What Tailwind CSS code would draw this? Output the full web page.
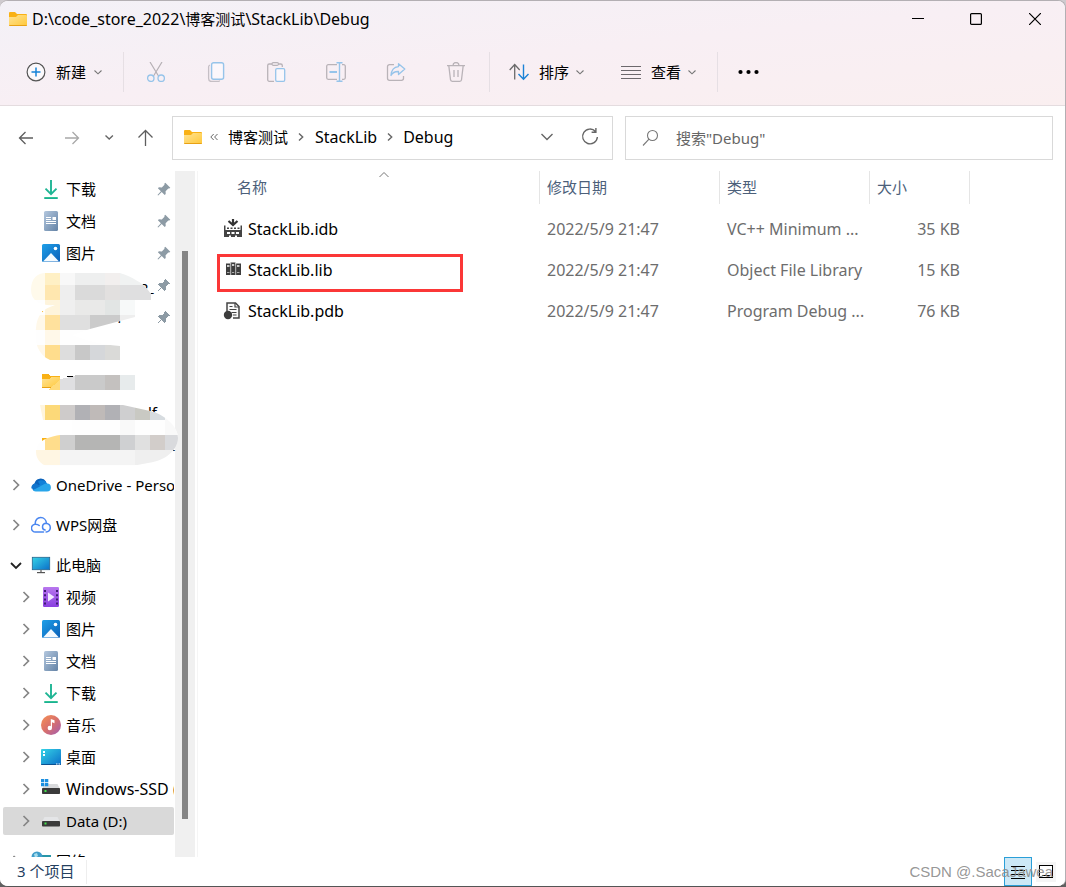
<!DOCTYPE html>
<html lang="zh-CN">
<head>
<meta charset="utf-8">
<title>D:\code_store_2022\博客测试\StackLib\Debug</title>
<script src="https://cdn.jsdelivr.net/npm/@tailwindcss/browser@4"></script>
</head>
<body class="h-screen overflow-hidden bg-linear-to-b from-[#cfcbcf] to-[#606060] font-['Noto_Sans','Noto_Sans_CJK_SC',sans-serif] text-[15px] leading-5 text-black">

<svg class="absolute size-0" aria-hidden="true">
  <defs>
    <linearGradient id="gFolder" x1="0" y1="0" x2="1" y2="1"><stop offset="0" stop-color="#ffe394"/><stop offset="1" stop-color="#ffc83a"/></linearGradient>
    <linearGradient id="gBlue" x1="0" y1="0" x2="1" y2="1"><stop offset="0" stop-color="#1fa0e8"/><stop offset="1" stop-color="#0a5fb8"/></linearGradient>
    <linearGradient id="gCyan" x1="0" y1="0" x2="1" y2="1"><stop offset="0" stop-color="#35d3e6"/><stop offset="1" stop-color="#0b6fc9"/></linearGradient>
    <linearGradient id="gGreen" x1="0" y1="0" x2="0" y2="1"><stop offset="0" stop-color="#3ccf93"/><stop offset="1" stop-color="#10a394"/></linearGradient>
    <linearGradient id="gDoc" x1="0" y1="0" x2="1" y2="1"><stop offset="0" stop-color="#b3c7de"/><stop offset="1" stop-color="#6483a6"/></linearGradient>
    <linearGradient id="gVideo" x1="0" y1="0" x2="0" y2="1"><stop offset="0" stop-color="#b877ee"/><stop offset="1" stop-color="#8a3fe0"/></linearGradient>
    <linearGradient id="gMusic" x1="0" y1="0" x2="1" y2="1"><stop offset="0" stop-color="#f79153"/><stop offset=".5" stop-color="#d8706c"/><stop offset="1" stop-color="#a05cb5"/></linearGradient>
  </defs>
  <symbol id="folder" viewBox="0 0 18 14"><path d="M0 1a1 1 0 0 1 1-1h5l2 2h9a1 1 0 0 1 1 1v3H0z" fill="#f9b115"/><path d="M0 5h7l2-2h8a1 1 0 0 1 1 1v9a1 1 0 0 1-1 1H1a1 1 0 0 1-1-1z" fill="url(#gFolder)"/><path d="M0 13h18a1 1 0 0 1-1 1H1a1 1 0 0 1-1-1z" fill="#e8a114"/></symbol>
  <symbol id="chev" viewBox="0 0 20 20"><path d="M7.500 5l5 5-5 5" fill="none" stroke="#858585" stroke-width="1.700"/></symbol>
  <symbol id="down" viewBox="0 0 20 20"><path d="M5 8l5 5 5-5" fill="none" stroke="currentColor" stroke-width="1.800"/></symbol>
  <symbol id="smalldown" viewBox="0 0 10 10"><path d="M1.500 3.500L5 6.800l3.500-3.300" fill="none" stroke="#777" stroke-width="1.100"/></symbol>
  <symbol id="download" viewBox="0 0 20 20"><path d="M10 1v14M4.500 9.700l5.500 5.500 5.500-5.500" fill="none" stroke="#1fb594" stroke-width="1.900"/><rect x="3" y="18" width="14" height="2" rx="1" fill="url(#gGreen)"/></symbol>
  <symbol id="doc" viewBox="0 0 20 20"><rect x="3" width="14" height="20" rx="1.500" fill="url(#gDoc)"/><path d="M5 6.500h5M5 8.500h5M5 10.500h10M5 12.500h10" stroke="#fff"/><rect x="11.500" y="6" width="3.500" height="3" fill="#fff"/></symbol>
  <symbol id="pic" viewBox="0 0 20 20"><rect x="1" y="1" width="18" height="18" rx="1.500" fill="url(#gBlue)"/><path d="M2 18.500L10 10l8 8.500z" fill="#f4faff"/><circle cx="14.500" cy="5.500" r="1.800" fill="#fff"/></symbol>
  <symbol id="pin" viewBox="0 0 14 14"><path d="M8.300.8l5 5-1 .8-1-.2-2.700 2.800.1 2.800-1 1-3-3L1.200 13.500.500 13l3.400-3.700-3-3 1-1 2.900.1L7.500 2.700l-.200-1z" fill="#8d9ba5"/></symbol>
  <symbol id="drive" viewBox="0 0 20 20"><path d="M3.500 6h13l2.500 5H1z" fill="#e4e5e7"/><rect x="1" y="10" width="18" height="5.500" rx=".8" fill="#3b3b3b"/><rect x="3.500" y="11.500" width="2" height="2" fill="#42e04c"/></symbol>
</svg>

<div class="flex h-full flex-col overflow-hidden rounded-lg border-t border-r border-b border-[#b3afb3] border-b-[#555555] bg-white">

  <header class="shrink-0 border-b border-[#e4dcdf] bg-linear-to-br from-[#f3f1f7] via-[#f8eff4] to-[#faeff0]">
    <div class="flex h-9 items-center pl-[9px]">
      <svg class="h-[14px] w-[18px]"><use href="#folder"/></svg>
      <h1 class="ml-[5px] flex-1"><span class="text-base leading-5">D:\code_store_2022\</span>博客测试<span class="text-base leading-5">\StackLib\Debug</span></h1>
      <button aria-label="最小化" class="flex h-9 w-[58px] items-center justify-center"><svg class="size-3" viewBox="0 0 12 12"><path d="M0 5.500h12" stroke="#000"/></svg></button>
      <button aria-label="最大化" class="flex h-9 w-[58px] items-center justify-center"><svg class="size-3" viewBox="0 0 12 12"><rect x=".6" y=".6" width="10.800" height="10.800" rx="1" fill="none" stroke="#000" stroke-width="1.200"/></svg></button>
      <button aria-label="关闭" class="flex h-9 w-[60px] items-center justify-center"><svg class="size-3" viewBox="0 0 12 12"><path d="M0 0l12 12M12 0L0 12" stroke="#000" stroke-width="1.200"/></svg></button>
    </div>

    <div class="flex h-[68px] items-center pt-px">
      <button class="ml-[26px] flex items-center">
        <svg class="size-5" viewBox="0 0 20 20" fill="none"><circle cx="10" cy="10" r="8.900" fill="#fbf9fb" stroke="#555" stroke-width="1.200"/><path d="M10 5.500v9M5.500 10h9" stroke="#1683d8" stroke-width="1.500"/></svg>
        <span class="ml-[10px]">新建</span>
        <svg class="ml-[7px] size-[10px]"><use href="#smalldown"/></svg>
      </button>
      <span class="ml-5 h-10 w-px bg-[#e6dfe4]"></span>
      <div class="ml-3 flex gap-5">
        <button disabled aria-label="剪切" class="flex size-10 items-center justify-center"><svg class="size-5" viewBox="0 0 20 20" fill="none"><path d="M4 0l8.500 14M16 0L7.500 14" stroke="#b6b0b5" stroke-width="1.200"/><circle cx="4.800" cy="16.200" r="3.200" stroke="#96c4ea" stroke-width="1.300"/><circle cx="15.200" cy="16.200" r="3.200" stroke="#96c4ea" stroke-width="1.300"/></svg></button>
        <button disabled aria-label="复制" class="flex size-10 items-center justify-center"><svg class="size-5" viewBox="0 0 20 20" fill="none"><path d="M4 3a2 2 0 0 0-1.400 2v11.500a3 3 0 0 0 3 3H12a2 2 0 0 0 1.800-1" stroke="#c5bfc5" stroke-width="1.300"/><rect x="5.600" y=".7" width="12" height="16.500" rx="2" fill="#fbf7fb" stroke="#96c4ea" stroke-width="1.400"/></svg></button>
        <button disabled aria-label="粘贴" class="flex size-10 items-center justify-center"><svg class="size-5" viewBox="0 0 20 20" fill="none"><path d="M8 19.300H3.200a1.500 1.500 0 0 1-1.500-1.500V3.500A1.500 1.500 0 0 1 3.200 2H6M12 2h2.800a1.500 1.500 0 0 1 1.500 1.500V5" stroke="#b9b3b8" stroke-width="1.300"/><rect x="6" y=".7" width="6.500" height="2.600" rx="1.200" stroke="#b9b3b8" stroke-width="1.200"/><rect x="9.700" y="6.700" width="9" height="12.600" rx="1.300" fill="#fbf7fb" stroke="#96c4ea" stroke-width="1.300"/></svg></button>
        <button disabled aria-label="重命名" class="flex size-10 items-center justify-center"><svg class="size-5" viewBox="0 0 20 20" fill="none"><path d="M11 2.700H2.200A1.500 1.500 0 0 0 .7 4.200v11.600a1.500 1.500 0 0 0 1.500 1.500H11M16 2.700h1.800a1.500 1.500 0 0 1 1.500 1.500v11.600a1.500 1.500 0 0 1-1.500 1.500H16" stroke="#b9b3b8" stroke-width="1.300"/><path d="M10.500.7h6M13.500.7v18.600M10.500 19.300h6" stroke="#96c4ea" stroke-width="1.400"/><path d="M3.500 10h7.500" stroke="#96c4ea" stroke-width="2.200"/></svg></button>
        <button disabled aria-label="共享" class="flex size-10 items-center justify-center"><svg class="size-5" viewBox="0 0 20 20" fill="none"><path d="M8 2.700H3.500a2 2 0 0 0-2 2v11.600a2 2 0 0 0 2 2h12a2 2 0 0 0 2-2V14" stroke="#b9b3b8" stroke-width="1.300"/><path d="M12.500 1.700L18.800 7l-6.300 5.500V9.500C8.500 9.300 6.500 10.700 5 13.500 5.300 8.500 8 5 12.500 4.600z" stroke="#96c4ea" stroke-width="1.300" stroke-linejoin="round"/></svg></button>
        <button disabled aria-label="删除" class="flex size-10 items-center justify-center"><svg class="size-5" viewBox="0 0 20 20" fill="none" stroke="#b9b3b8" stroke-width="1.300"><path d="M1 3.700h18M7 3.500a3 3 0 0 1 6 0M2.800 3.700l1.700 14a1.800 1.800 0 0 0 1.700 1.600h7.600a1.800 1.800 0 0 0 1.700-1.600l1.700-14M8 8v7M12 8v7"/></svg></button>
      </div>
      <span class="ml-[13px] h-10 w-px bg-[#e6dfe4]"></span>
      <button class="ml-[19px] flex items-center">
        <svg class="size-5" viewBox="0 0 20 20" fill="none"><path d="M5.700 17.500V3M.7 8l5-5.500 5 5.500" stroke="#6a6a6a" stroke-width="1.300"/><path d="M14.500 2.500V17M9.500 12l5 5.300 5-5.300" stroke="#1b82d6" stroke-width="1.400"/></svg>
        <span class="ml-[10px]">排序</span>
        <svg class="ml-[6px] size-[10px]"><use href="#smalldown"/></svg>
      </button>
      <button class="ml-[36px] flex items-center">
        <svg class="size-5" viewBox="0 0 20 20"><path d="M0 4.500h20M0 8.500h20M0 12.500h20M0 16.500h20" stroke="#6c686c" stroke-width="1.200"/></svg>
        <span class="ml-[10px]">查看</span>
        <svg class="ml-[6px] size-[10px]"><use href="#smalldown"/></svg>
      </button>
      <span class="ml-5 h-10 w-px bg-[#e6dfe4]"></span>
      <button aria-label="查看更多" class="ml-5"><svg class="h-5 w-[21px]" viewBox="0 0 21 20"><circle cx="2.500" cy="10" r="2.100"/><circle cx="10.500" cy="10" r="2.100"/><circle cx="18.500" cy="10" r="2.100"/></svg></button>
    </div>
  </header>

  <div class="flex h-[65px] shrink-0 items-center pr-3 pb-px">
    <nav class="flex w-[172px] shrink-0 items-center">
      <button aria-label="后退" class="ml-4"><svg class="size-5" viewBox="0 0 20 20" fill="none" stroke="#5e5e5e" stroke-width="1.300"><path d="M17 10H3.500M9.500 4l-6 6 6 6"/></svg></button>
      <button aria-label="前进" class="ml-[26px]"><svg class="size-5" viewBox="0 0 20 20" fill="none" stroke="#a8a8a8" stroke-width="1.300"><path d="M3 10h13.500M10.500 4l6 6-6 6"/></svg></button>
      <button aria-label="最近浏览的位置" class="ml-[17px]"><svg class="size-5" viewBox="0 0 20 20" fill="none" stroke="#666" stroke-width="1.400"><path d="M6.500 7.500l3.700 3.500 3.700-3.500"/></svg></button>
      <button aria-label="上移" class="ml-4"><svg class="size-5" viewBox="0 0 20 20" fill="none" stroke="#5e5e5e" stroke-width="1.300"><path d="M10.500 18V2.700M3.500 9.500l7-7 7 7"/></svg></button>
    </nav>
    <div class="flex h-11 flex-1 items-center border border-[#d9d9d9] pb-0.5 pl-[11px]">
      <svg class="h-[14px] w-[18px]"><use href="#folder"/></svg>
      <svg class="ml-2 size-2" viewBox="0 0 8 8" fill="none" stroke="#666"><path d="M3.700 1L.8 4l2.900 3M7.500 1L4.600 4l2.900 3"/></svg>
      <a href="#" class="ml-[10px]">博客测试</a>
      <svg class="ml-[3px] size-5" viewBox="0 0 20 20" fill="none" stroke="#666" stroke-width="1.400"><path d="M8 6.500l3.700 3.500L8 13.500"/></svg>
      <a href="#" class="ml-1 text-base leading-5">StackLib</a>
      <svg class="ml-[3px] size-5" viewBox="0 0 20 20" fill="none" stroke="#666" stroke-width="1.400"><path d="M8 6.500l3.700 3.500L8 13.500"/></svg>
      <a href="#" class="ml-[3px] text-base leading-5">Debug</a>
      <button aria-label="以前的位置" class="ml-auto"><svg class="size-5" viewBox="0 0 20 20" fill="none" stroke="#666" stroke-width="1.400"><path d="M4.500 7l5.500 5.500L15.500 7"/></svg></button>
      <button aria-label="刷新" class="mr-3 ml-[23px]"><svg class="size-5" viewBox="0 0 20 20" fill="none" stroke="#666" stroke-width="1.400"><path d="M15.500 4.500A7.400 7.400 0 1 0 17.400 10M15.900 1v4.200h-4.300"/></svg></button>
    </div>
    <label class="ml-3 flex h-11 w-[428px] items-center border border-[#d9d9d9] pl-4">
      <svg class="size-[18px]" viewBox="0 0 18 18" fill="none" stroke="#777" stroke-width="1.100"><circle cx="10.500" cy="6.500" r="5"/><path d="M7 10.200L1 16.500"/></svg>
      <input type="search" aria-label="搜索" placeholder='搜索"Debug"' class="ml-4 min-w-0 flex-1 text-[15px] outline-none placeholder:text-[#666666]">
    </label>
  </div>

  <div class="flex min-h-0 flex-1 overflow-hidden">
    <aside class="w-[175px] shrink-0 pt-[2px] pr-px whitespace-nowrap">
      <ul>
        <li class="flex h-8 items-center pl-[41px]"><svg class="size-5"><use href="#download"/></svg><span class="ml-[5px]">下载</span><svg class="mr-[3px] ml-auto size-[14px]"><use href="#pin"/></svg></li>
        <li class="flex h-8 items-center pl-[41px]"><svg class="size-5"><use href="#doc"/></svg><span class="ml-[5px]">文档</span><svg class="mr-[3px] ml-auto size-[14px]"><use href="#pin"/></svg></li>
        <li class="flex h-8 items-center pl-[41px]"><svg class="size-5"><use href="#pic"/></svg><span class="ml-[5px]">图片</span><svg class="mr-[3px] ml-auto size-[14px]"><use href="#pin"/></svg></li>
      </ul>

      <!-- Private folders, covered by a mosaic brush -->
      <svg class="relative block h-[200px] w-[180px] max-w-none" viewBox="0 269 180 200" shape-rendering="crispEdges" aria-hidden="true">
        <defs>
          <clipPath id="brush1"><path d="M31 290C31 278 38 273 45 273h75c12 4 23 10 28 17l3 4v6h-16v17L90 329 72 335c12 5 27 9 48 11v14H50C38 355 34 342 36 328c1-12 6-19 19-23C42 306 31 302 31 290z"/></clipPath>
          <clipPath id="brush3"><path d="M40 405h83l27 6c14 3 28 15 28 27 0 12-13 23-30 25l-16 3H60c-14 4-24-4-24-14 0-8 6-14 24-17l12-1.500V420H43z"/></clipPath>
        </defs>
        <use href="#pin" x="157" y="278" width="14" height="14"/>
        <use href="#pin" x="157" y="310" width="14" height="14"/>
        <g font-size="15"><text x="140" y="294">2</text><text x="147" y="292">_</text><text x="117" y="323">f</text><text x="148" y="418">lf</text><text x="168" y="449">_</text></g>
        <path d="M42 311h3v2h-3z" fill="#f9b115"/>
        <use href="#folder" x="42" y="374" width="18" height="14"/>
        <use href="#folder" x="42" y="438" width="18" height="14"/>
        <path d="M67 376h6v1h-6z"/>
        <g clip-path="url(#brush1)">
          <path d="M31 273h120v87H31z" fill="#fefefe"/>
          <path d="M31 273h14v27H31z" fill="#fffaeb"/><path d="M45 273h15v12H45z" fill="#fff0c5"/><path d="M45 285h15v15H45z" fill="#ffe7af"/><path d="M45 300h15v15H45z" fill="#fef4dc"/><path d="M45 315h15v15H45z" fill="#ffe19d"/><path d="M45 345h15v15H45z" fill="#ffdd8d"/>
          <path d="M31 315h14v15H31zM45 330h15v15H45zM31 345h14v15H31z" fill="#fff8e9"/>
          <path d="M60 273h15v12H60z" fill="#f8f8f8"/><path d="M75 273h30v12H75z" fill="#eeefef"/><path d="M105 273h15v12h-15z" fill="#f2efee"/><path d="M120 273h31v12h-31z" fill="#f0f2f2"/>
          <path d="M60 285h15v15H60z" fill="#eeeeee"/><path d="M75 285h30v15H75z" fill="#dadada"/><path d="M105 285h15v15h-15z" fill="#e2e0df"/><path d="M120 285h31v15h-31z" fill="#dfdfe0"/>
          <path d="M60 300h15v15H60z" fill="#efefef"/><path d="M75 300h30v15H75z" fill="#e9e9e8"/><path d="M105 300h15v15h-15z" fill="#e2e5e4"/><path d="M120 300h15v15h-15z" fill="#f7f9f9"/>
          <path d="M60 315h30v15H60z" fill="#dfdfdf"/><path d="M90 315h30v15H90z" fill="#cbcbcb"/><path d="M120 315h15v15h-15z" fill="#eeeeee"/>
          <path d="M60 345h15v15H60z" fill="#dddddd"/><path d="M75 345h15v15H75z" fill="#c8c8c8"/><path d="M90 345h15v15H90z" fill="#d5d7da"/><path d="M105 345h15v15h-15z" fill="#dadad8"/>
        </g>
        <path d="M48 390l12-10v10z" fill="#ffdb7b"/><path d="M60 379l15-3v14H60z" fill="#dfdfe1"/><path d="M75 375h30v15H75z" fill="#cacaca"/><path d="M105 375h15v15h-15z" fill="#c4c1bf"/><path d="M120 375h15v15h-15z" fill="#e7ebec"/>
        <g clip-path="url(#brush3)">
          <path d="M40 405h138v61H36z" fill="#fefefe"/>
          <path d="M40 405h5v15h-5z" fill="#fff5dc"/><path d="M45 405h15v15H45z" fill="#fcd979"/><path d="M60 405h15v15H60z" fill="#cecbca"/><path d="M75 405h15v15H75zM105 405h15v15h-15z" fill="#b1b1b5"/><path d="M90 405h15v15H90z" fill="#bfbab8"/><path d="M120 405h15v15h-15z" fill="#cfcfd0"/><path d="M135 405h15v15h-15z" fill="#c9c9c3"/><path d="M150 405h15v15h-15z" fill="#d7dce0"/>
          <path d="M120 420h15v15h-15zM165 415h13v20h-13z" fill="#f9f9f9"/>
          <path d="M45 435h15v15H45z" fill="#ffdd8c"/><path d="M60 435h15v15H60z" fill="#cfcfcf"/><path d="M75 435h45v15H75z" fill="#b5b5b4"/><path d="M120 435h15v15h-15z" fill="#cfd0d2"/><path d="M135 435h15v15h-15z" fill="#e0e0e0"/><path d="M150 435h15v15h-15z" fill="#d2cdca"/><path d="M165 435h13v15h-13z" fill="#d9dadd"/>
          <path d="M36 450h24v15H36z" fill="#fff6e3"/><path d="M60 450h75v15H60z" fill="#f4f4f4"/><path d="M135 450h43v15h-43z" fill="#efefef"/>
        </g>
      </svg>

      <ul class="overflow-hidden">
        <li class="flex h-8 items-center pl-[6px]"><svg class="size-5 shrink-0"><use href="#chev"/></svg><svg class="ml-[5px] size-5 shrink-0" viewBox="0 0 20 20"><path d="M4 16a4 4 0 0 1-.5-7.500A6.300 6.300 0 0 1 15 6.500l-3 7z" fill="#0b62ba"/><path d="M7 6.500a6 6 0 0 1 9.500 3L11 13z" fill="#1080d8"/><path d="M1.500 14.500L9 9.500l8 6-13 .5z" fill="#1589dc"/><path d="M0.500 13.500a4 4 0 0 1 5-4.800L16 15z" fill="#1175cd"/><path d="M2 15.200L12.500 9.600a4.500 4.500 0 0 1 3.500-1 3.900 3.900 0 0 1 0 7.800H5a4.500 4.500 0 0 1-3-1.200z" fill="#28a5ea"/></svg><span class="ml-[5px]">OneDrive - Personal</span></li>
        <li class="mt-2 flex h-8 items-center pl-[6px]"><svg class="size-5"><use href="#chev"/></svg><svg class="ml-[5px] size-5" viewBox="0 0 20 20" fill="none" stroke="#4a86f0" stroke-width="1.500" stroke-linecap="round"><path d="M12.500 17h-8a3.900 3.900 0 0 1-.3-7.800C4 5 6.500 2.500 9.700 2.500s5.500 2.600 5.700 5.800c2.500.6 3.900 2.300 3.900 4.400a4.200 4.200 0 0 1-4.200 4.300M4.200 9.200c1.800-.1 3 .3 4 1.300M15.400 8.300c-2.200.1-3.900 1.500-3.900 3.700 0 1.800 1.200 2.900 2.700 2.900"/></svg><span class="ml-[5px]">WPS网盘</span></li>
        <li class="mt-2 flex h-8 items-center pl-[6px]"><svg class="size-5 text-[#222222]"><use href="#down"/></svg><svg class="ml-[5px] size-5" viewBox="0 0 20 20"><rect x="1.300" y="2.300" width="17.400" height="12.400" fill="url(#gCyan)" stroke="#25658e" stroke-width=".8"/><path d="M9 15h2v2H9z" fill="#999"/><path d="M6 17h8v1.200H6z" fill="#555"/></svg><span class="ml-[5px]">此电脑</span></li>
        <li class="flex h-8 items-center pl-4"><svg class="size-5"><use href="#chev"/></svg><svg class="ml-[5px] size-5" viewBox="0 0 20 20"><rect x="2" width="16" height="20" rx="1.200" fill="url(#gVideo)"/><path d="M4 3v15M16 3v15" stroke="#3f1b73" stroke-width="2" stroke-dasharray="2 2.200"/><path d="M7 5.500l6.500 4.500L7 14.500z" fill="#f2e9ff"/></svg><span class="ml-[5px]">视频</span></li>
        <li class="flex h-8 items-center pl-4"><svg class="size-5"><use href="#chev"/></svg><svg class="ml-[5px] size-5"><use href="#pic"/></svg><span class="ml-[5px]">图片</span></li>
        <li class="flex h-8 items-center pl-4"><svg class="size-5"><use href="#chev"/></svg><svg class="ml-[5px] size-5"><use href="#doc"/></svg><span class="ml-[5px]">文档</span></li>
        <li class="flex h-8 items-center pl-4"><svg class="size-5"><use href="#chev"/></svg><svg class="ml-[5px] size-5"><use href="#download"/></svg><span class="ml-[5px]">下载</span></li>
        <li class="flex h-8 items-center pl-4"><svg class="size-5"><use href="#chev"/></svg><svg class="ml-[5px] size-5" viewBox="0 0 20 20"><circle cx="10" cy="10" r="10" fill="url(#gMusic)"/><circle cx="8.800" cy="13" r="2.200" fill="#fff"/><path d="M9.800 13V4l3.700 1.200v3L11 7.300V13z" fill="#fff"/></svg><span class="ml-[5px]">音乐</span></li>
        <li class="flex h-8 items-center pl-4"><svg class="size-5"><use href="#chev"/></svg><svg class="ml-[5px] size-5" viewBox="0 0 20 20"><rect y="2" width="20" height="16" rx="1" fill="url(#gCyan)"/><path d="M0 17h20a1 1 0 0 1-1 1H1a1 1 0 0 1-1-1z" fill="#0c5191"/><path d="M2 4h2v2H2zM2 7h2v2H2zM15 16.500h1.500v1H15zM17.500 16.500H19v1h-1.500z" fill="#fff"/></svg><span class="ml-[5px]">桌面</span></li>
        <li class="flex h-8 items-center pl-4"><svg class="size-5 shrink-0"><use href="#chev"/></svg><svg class="ml-[5px] size-5 shrink-0" viewBox="0 0 20 20"><path d="M3.500 5h13l2.500 5H1z" fill="#d9dadc"/><rect x="1" y="9" width="18" height="6" rx=".8" fill="#3b3b3b"/><rect x="3.500" y="11" width="2" height="2" fill="#42e04c"/><path d="M0 0h3.300v3.300H0zM4 0h3.300v3.300H4zM0 4h3.300v3.300H0zM4 4h3.300v3.300H4z" fill="#1c8fe0"/></svg><span class="ml-[5px] text-base leading-5">Windows-SSD (C:)</span></li>
        <li class="flex h-8 items-center"><div class="ml-[3px] flex h-7 flex-1 items-center rounded-xs bg-[#d9d9d9] pl-[13px]"><svg class="size-5"><use href="#chev"/></svg><svg class="ml-[5px] size-5"><use href="#drive"/></svg><span class="ml-[5px]">Data (D:)</span></div></li>
        <li class="mt-2 flex h-8 items-center pl-[6px]"><svg class="size-5"><use href="#chev"/></svg><svg class="ml-[5px] size-5" viewBox="0 0 20 20"><rect x="4" y="4" width="16" height="12" fill="#2796a8"/><circle cx="6" cy="6" r="5.500" fill="#3f9dc9"/><path d="M3 3l3-1 1 3-3 2z" fill="#a6dcec"/></svg><span class="ml-[5px]">网络</span></li>
      </ul>
    </aside>
    <div class="w-5 shrink-0 bg-[#f0f0f0] pt-20"><div class="ml-[7px] h-[568px] w-[6px] bg-[#858585]"></div></div>
    <main class="ml-[2px] min-w-0 flex-1 border-l border-[#f5f5f5]">
      <table class="w-[772px] table-fixed border-collapse text-[#6d6d6d]">
        <colgroup><col class="w-[342px]"><col class="w-[180px]"><col class="w-[150px]"><col class="w-[100px]"></colgroup>
        <thead>
          <tr class="text-left text-[#4c607a]">
            <th class="relative h-[38px] p-0 align-top font-normal"><div class="flex h-[33px] items-center border-r border-[#e5e5e5] pb-0.5 pl-[39px]">名称</div><svg class="absolute top-0 left-[181px] size-[10px]" viewBox="0 0 10 10" fill="none" stroke="#777"><path d="M.5 6L5 1.500 9.500 6"/></svg></th>
            <th class="p-0 align-top font-normal"><div class="flex h-[33px] items-center border-r border-[#e5e5e5] pb-0.5 pl-[7px]">修改日期</div></th>
            <th class="p-0 align-top font-normal"><div class="flex h-[33px] items-center border-r border-[#e5e5e5] pb-0.5 pl-[7px]">类型</div></th>
            <th class="p-0 align-top font-normal"><div class="flex h-[33px] items-center border-r border-[#e5e5e5] pb-0.5 pl-[7px]">大小</div></th>
          </tr>
        </thead>
        <tbody class="text-base leading-5">
          <tr class="h-[41px]">
            <td class="p-0 pb-px"><div class="flex items-center pl-[25px] text-black"><svg class="size-5" viewBox="0 0 20 20"><path d="M1 6.500h1.500V11h15V6.500H19V18H1z" fill="#444"/><path d="M4 8.500h2V10H4zM7.500 8.500h2V10h-2zM11 8.500h2V10h-2zM14.500 8.500h2V10h-2z" fill="#444"/><path d="M4 13h3v2H4zM8.500 13h3v2h-3zM13 13h3v2h-3zM6 16.500h2V18H6zM12 16.500h2V18h-2z" fill="#fff"/><path d="M10-1v7M5.500 2L10 6l4.500-4" fill="none" stroke="#333" stroke-width="2.200"/></svg><span class="ml-[5px]">StackLib.idb</span></div></td>
            <td class="p-0 pb-px pl-[7px]">2022/5/9 21:47</td><td class="p-0 pb-px pl-[7px] whitespace-nowrap">VC++ Minimum ...</td><td class="p-0 pr-[10px] pb-px text-right">35 KB</td>
          </tr>
          <tr class="h-[41px]">
            <td class="relative p-0 pb-px"><div class="flex items-center pl-[25px] text-black"><svg class="size-5" viewBox="0 0 20 20"><path d="M3 3.500h4.500v-1h5v1H18V15H3z" fill="#3d3d3d"/><path d="M7.700 3v12M12.700 3v12" stroke="#fff" stroke-width=".7"/><path d="M4 5h2.500v2H4zM9 4h2.200v2H9zM14 5h2.500v2H14z" fill="#ccc"/><path d="M4 12h2.500v1H4zM9 12h2.200v1H9zM14 12h2.500v1H14z" fill="#aaa"/></svg><span class="ml-[5px]">StackLib.lib</span></div><span class="absolute top-[4px] left-[19px] h-[38px] w-[246px] border-3 border-[#fb3737]"></span></td>
            <td class="p-0 pb-px pl-[7px]">2022/5/9 21:47</td><td class="p-0 pb-px pl-[7px] whitespace-nowrap">Object File Library</td><td class="p-0 pr-[10px] pb-px text-right">15 KB</td>
          </tr>
          <tr class="h-[41px]">
            <td class="p-0 pb-px"><div class="flex items-center pl-[25px] text-black"><svg class="size-5" viewBox="0 0 20 20"><path d="M4 10V2h8.500L16 5.500V17h-6" fill="#fafafa" stroke="#444" stroke-width="1.500"/><path d="M12 2v4h4M6.500 5.500h3M6.500 8.500h7M8.500 11.500h5M10 14h3.500" fill="none" stroke="#444" stroke-width="1.200"/><circle cx="5" cy="14" r="4.200" fill="#3d3d3d"/></svg><span class="ml-[5px]">StackLib.pdb</span></div></td>
            <td class="p-0 pb-px pl-[7px]">2022/5/9 21:47</td><td class="p-0 pb-px pl-[7px] whitespace-nowrap">Program Debug ...</td><td class="p-0 pr-[10px] pb-px text-right">76 KB</td>
          </tr>
        </tbody>
      </table>
    </main>
  </div>

  <footer class="relative flex h-[29px] shrink-0 items-center bg-white pl-[17px] text-[#24405f]">
    <span class="pb-0.5">3 个项目</span>
    <span class="ml-3 h-6 w-px bg-[#eeeeee]"></span>
    <button aria-label="详细信息" class="ml-auto flex h-[29px] w-7 items-center justify-center border border-[#2a9fd8] bg-[#cce8f6]"><svg class="size-4" viewBox="0 0 16 16"><path d="M1 2.500h14M1 6.500h14M1 10.500h14M1 14.500h14" stroke="#000"/></svg></button>
    <button aria-label="大图标" class="mr-[9px] ml-1 flex size-5 items-center justify-center bg-[#f5f5f5]"><svg class="size-[14px]" viewBox="0 0 14 14"><rect x=".5" y=".5" width="13" height="12" fill="#fff" stroke="#000"/><path d="M3 10.500h8" stroke="#000"/></svg></button>
    <span class="pointer-events-none absolute right-3 bottom-1 font-['Liberation_Sans',sans-serif] text-[15px] text-[#8a8a8a]/90">CSDN @.SacaJawea</span>
  </footer>
</div>
</body>
</html>
